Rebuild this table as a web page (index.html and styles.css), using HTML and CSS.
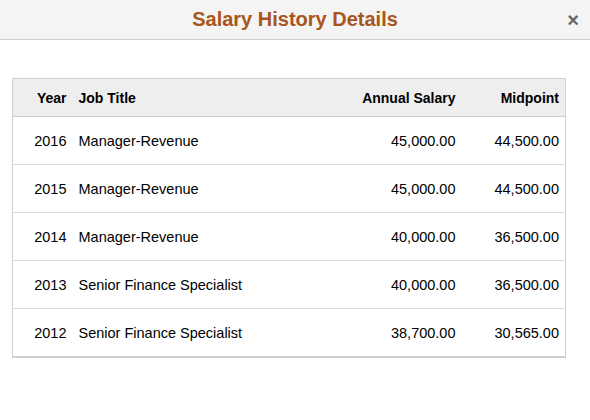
FILE: index.html
```html
<!DOCTYPE html>
<html lang="en">

<head>
    <meta charset="UTF-8">
    <title>Salary History Details</title>
    <link rel="stylesheet" href="styles.css">
</head>

<body>
    <div class="titlebar">
        <h1 class="title">Salary History Details</h1>
        <span class="close">&times;</span>
    </div>
    <div class="content">
        <table class="grid">
            <colgroup>
                <col class="c-year">
                <col class="c-job">
                <col class="c-salary">
                <col class="c-mid">
            </colgroup>
            <thead>
                <tr>
                    <th class="num">Year</th>
                    <th>Job Title</th>
                    <th class="num">Annual Salary</th>
                    <th class="num">Midpoint</th>
                </tr>
            </thead>
            <tbody>
                <tr>
                    <td class="num">2016</td>
                    <td>Manager-Revenue</td>
                    <td class="num">45,000.00</td>
                    <td class="num">44,500.00</td>
                </tr>
                <tr>
                    <td class="num">2015</td>
                    <td>Manager-Revenue</td>
                    <td class="num">45,000.00</td>
                    <td class="num">44,500.00</td>
                </tr>
                <tr>
                    <td class="num">2014</td>
                    <td>Manager-Revenue</td>
                    <td class="num">40,000.00</td>
                    <td class="num">36,500.00</td>
                </tr>
                <tr>
                    <td class="num">2013</td>
                    <td>Senior Finance Specialist</td>
                    <td class="num">40,000.00</td>
                    <td class="num">36,500.00</td>
                </tr>
                <tr>
                    <td class="num">2012</td>
                    <td>Senior Finance Specialist</td>
                    <td class="num">38,700.00</td>
                    <td class="num">30,565.00</td>
                </tr>
            </tbody>
        </table>
    </div>
</body>

</html>
```

FILE: styles.css
```css
body {
    margin: 0;
    background: #fff;
    font-family: "Liberation Sans", Arial, sans-serif;
    font-size: 14px;
    color: #000;
}

.titlebar {
    position: relative;
    height: 39px;
    background: #f4f4f4;
    border-bottom: 1px solid #cfcfcf;
    display: flex;
    align-items: center;
    justify-content: center;
}

.title {
    margin: 0;
    font-size: 20px;
    font-weight: bold;
    color: #a8561c;
}

.close {
    position: absolute;
    right: 11px;
    top: 10px;
    font-size: 20px;
    font-weight: bold;
    color: #666;
    line-height: 20px;
}

.content {
    padding: 38px 24px 0 12px;
}

.grid {
    width: 554px;
    table-layout: fixed;
    border-collapse: collapse;
    border: 1px solid #d0d0d0;
    border-bottom: 2px solid #d0d0d0;
}

.c-year {
    width: 60px;
}

.c-salary {
    width: 120px;
}

.c-mid {
    width: 104px;
}

.grid th {
    height: 37px;
    background: #eee;
    border-bottom: 1px solid #cfcfcf;
    padding: 0 6px;
    text-align: left;
    font-weight: bold;
}

.grid td {
    height: 47px;
    padding: 0 6px;
    font-size: 14.5px;
    border-bottom: 1px solid #d9d9d9;
}

.grid tr:last-child td {
    border-bottom: none;
}

.grid .num {
    text-align: right;
}
```
